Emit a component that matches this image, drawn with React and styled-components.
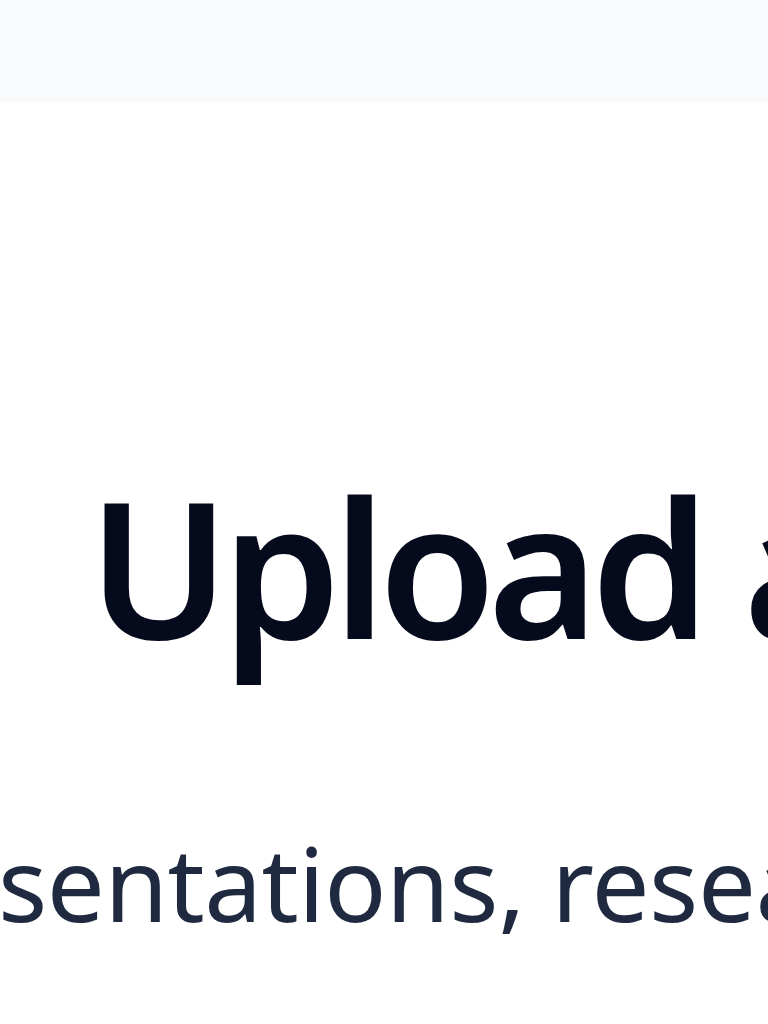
import React from 'react';
import styled, { createGlobalStyle } from 'styled-components';

const Global = createGlobalStyle`
  html, body {
    margin: 0;
    padding: 0;
    background: #ffffff;
    font-family: "Noto Sans", "Open Sans", sans-serif;
  }
`;

const Page = styled.div`
  width: 768px;
  height: 1024px;
  overflow: hidden;
  background: #ffffff;
`;

const TopBar = styled.header`
  height: 103px;
  background: #f9fafc;
`;

const Hero = styled.section`
  padding-top: 368px;
  overflow: hidden;
`;

const Title = styled.h1`
  margin: 0;
  padding-left: 88px;
  font-size: 190px;
  line-height: 1;
  font-weight: 600;
  color: #050a1c;
  white-space: nowrap;
  letter-spacing: -8px;
`;

const Lead = styled.p`
  margin: 170px 0 0 -2px;
  font-size: 103px;
  line-height: 1;
  font-weight: 400;
  color: #1f2a40;
  white-space: nowrap;
  letter-spacing: -0.5px;
`;

export default function App() {
  return (
    <Page>
      <Global />
      <TopBar />
      <Hero>
        <Title>Upload and share</Title>
        <Lead>sentations, research papers</Lead>
      </Hero>
    </Page>
  );
}
